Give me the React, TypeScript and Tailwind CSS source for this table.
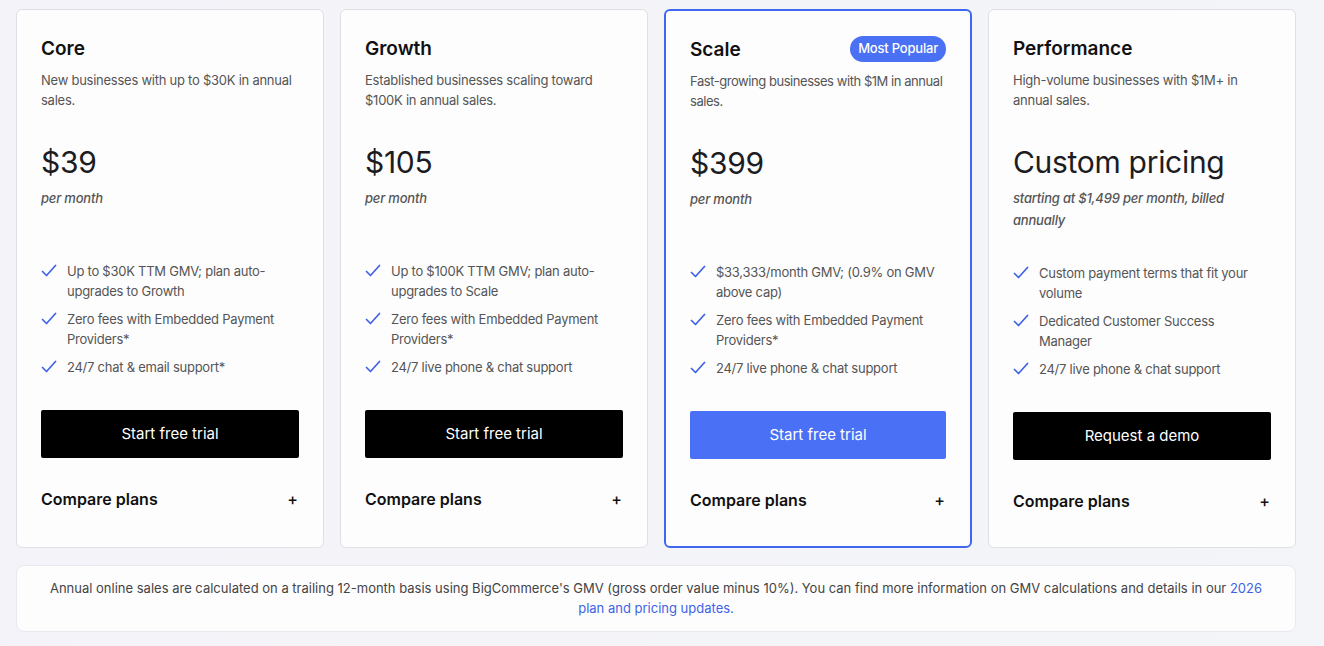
import { ReactNode } from "react";

interface Plan {
  name: string;
  description: string;
  price: string;
  priceNote: string;
  features: string[];
  cta: string;
  popular?: boolean;
}

const plans: Plan[] = [
  {
    name: "Core",
    description: "New businesses with up to $30K in annual sales.",
    price: "$39",
    priceNote: "per month",
    features: [
      "Up to $30K TTM GMV; plan auto-upgrades to Growth",
      "Zero fees with Embedded Payment Providers*",
      "24/7 chat & email support*",
    ],
    cta: "Start free trial",
  },
  {
    name: "Growth",
    description: "Established businesses scaling toward $100K in annual sales.",
    price: "$105",
    priceNote: "per month",
    features: [
      "Up to $100K TTM GMV; plan auto-upgrades to Scale",
      "Zero fees with Embedded Payment Providers*",
      "24/7 live phone & chat support",
    ],
    cta: "Start free trial",
  },
  {
    name: "Scale",
    description: "Fast-growing businesses with $1M in annual sales.",
    price: "$399",
    priceNote: "per month",
    features: [
      "$33,333/month GMV; (0.9% on GMV above cap)",
      "Zero fees with Embedded Payment Providers*",
      "24/7 live phone & chat support",
    ],
    cta: "Start free trial",
    popular: true,
  },
  {
    name: "Performance",
    description: "High-volume businesses with $1M+ in annual sales.",
    price: "Custom pricing",
    priceNote: "starting at $1,499 per month, billed annually",
    features: [
      "Custom payment terms that fit your volume",
      "Dedicated Customer Success Manager",
      "24/7 live phone & chat support",
    ],
    cta: "Request a demo",
  },
];

function CheckIcon() {
  return (
    <svg
      viewBox="0 0 16 16"
      className="w-4 h-4 mt-[2px] shrink-0 text-[#3f63e6]"
      fill="none"
      stroke="currentColor"
      strokeWidth="1.7"
      strokeLinecap="round"
      strokeLinejoin="round"
    >
      <path d="M1.5 8.5 L5.5 12.5 L14.5 2.5" />
    </svg>
  );
}

function Card({ plan }: { plan: Plan }): ReactNode {
  const border = plan.popular
    ? "border-2 border-[#3f67ef]"
    : "border border-[#e0dfe6]";
  return (
    <div
      className={`${border} rounded-[6px] bg-[#fdfdfe] flex flex-col px-6 pt-6 pb-[34px]`}
    >
      <div className="flex items-center justify-between h-7">
        <h3 className="text-[19px] leading-7 font-semibold text-[#111] translate-y-[1px]">
          {plan.name}
        </h3>
        {plan.popular ? (
          <span className="rounded-full bg-[#4a70f3] text-white text-[13px] font-medium h-[26px] px-2 flex items-center tracking-[-0.2px]">
            Most Popular
          </span>
        ) : null}
      </div>
      {/* scale copy runs a bit tighter so "annual" stays on line one */}
      <p
        className={`mt-2 text-[13px] leading-5 text-[#555] ${
          plan.popular ? "tracking-[-0.45px]" : "tracking-[-0.25px]"
        }`}
      >
        {plan.description}
      </p>
      <div className="mt-[34px] min-h-[85px]">
        <div className="text-[30px] leading-9 text-[#1c1c22] tracking-[-0.3px]">
          {plan.price}
        </div>
        <div className="mt-[7px] text-[13px] leading-[22px] italic font-medium text-[#555] tracking-[-0.2px]">
          {plan.priceNote}
        </div>
      </div>
      <ul className="mt-8 flex flex-col gap-2">
        {plan.features.map((f) => (
          <li
            key={f}
            className="flex gap-[10px] text-[13px] leading-5 text-[#555] tracking-[-0.25px]"
          >
            <CheckIcon />
            <span className="pr-2">{f}</span>
          </li>
        ))}
      </ul>
      <button
        className={`mt-[33px] h-12 w-full rounded-[2px] text-[15px] text-white ${
          plan.popular ? "bg-[#4a70f5]" : "bg-black"
        }`}
      >
        {plan.cta}
      </button>
      <div className="mt-[29px] flex items-center justify-between">
        <span className="text-[16px] leading-6 font-semibold text-[#111]">
          Compare plans
        </span>
        <span className="text-[16px] leading-6 font-medium text-[#111] pr-[1px]">
          +
        </span>
      </div>
    </div>
  );
}

export default function App() {
  return (
    <div
      className="min-h-[646px] bg-gradient-to-r from-[#f4f3f9] to-[#f3f5f8] pl-4 pt-[9px] pb-4"
      style={{ fontFamily: "Inter, 'Noto Sans', sans-serif" }}
    >
      <div className="w-[1280px]">
        <div className="grid grid-cols-4 gap-4 items-stretch">
          {plans.map((p) => (
            <Card key={p.name} plan={p} />
          ))}
        </div>
        <div className="mt-[17px] rounded-lg border border-[#e8e8ee] bg-[#fdfdfe] px-[30px] pt-3 pb-[13px] text-center text-[13px] leading-5 text-[#444]">
          Annual online sales are calculated on a trailing 12-month basis using
          BigCommerce's GMV (gross order value minus 10%). You can find more
          information on GMV calculations and details in our{" "}
          <a href="#" className="text-[#3f63e6]">
            2026 plan and pricing updates.
          </a>
        </div>
      </div>
    </div>
  );
}
